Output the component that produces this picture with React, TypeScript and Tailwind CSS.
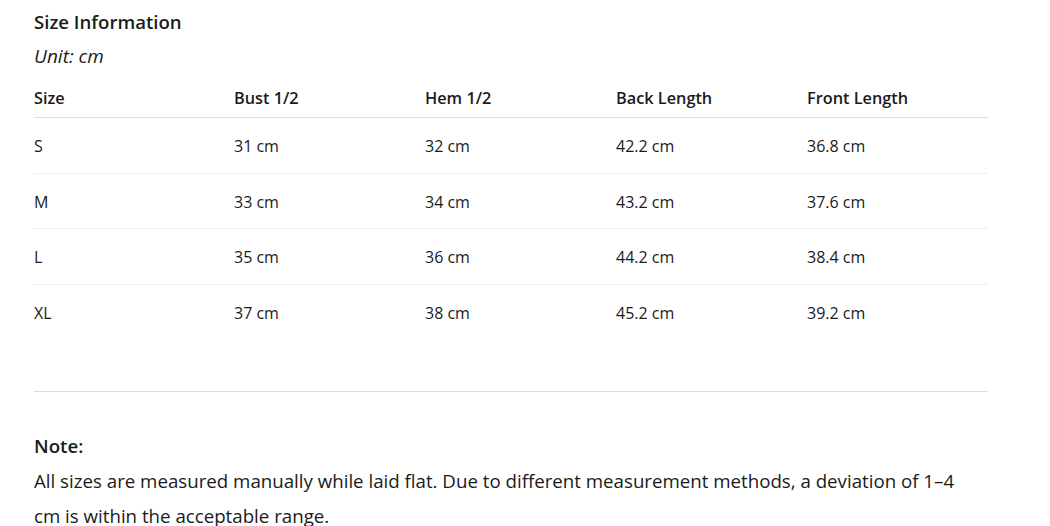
const rows = [
  { size: "S", bust: "31 cm", hem: "32 cm", back: "42.2 cm", front: "36.8 cm" },
  { size: "M", bust: "33 cm", hem: "34 cm", back: "43.2 cm", front: "37.6 cm" },
  { size: "L", bust: "35 cm", hem: "36 cm", back: "44.2 cm", front: "38.4 cm" },
  { size: "XL", bust: "37 cm", hem: "38 cm", back: "45.2 cm", front: "39.2 cm" },
];

const cols = "grid grid-cols-[200px_191px_191px_191px_1fr]";

export default function App() {
  return (
    <div className="bg-white w-[1050px] h-[526px] overflow-hidden px-[34px] text-[#1b1b1b] font-['Open_Sans',sans-serif]">
      <div className="w-[954px]">
        <h2 className="pt-[9px] text-[18.6px] leading-[26px] font-semibold">Size Information</h2>
        <p className="mt-[8px] text-[19px] leading-[26px] italic">Unit: cm</p>

        <div className="mt-[11px]">
          <div className={`${cols} h-[38px] items-center border-b border-[#dcdcdc] text-[16.3px] font-semibold`}>
            <div>Size</div>
            <div>Bust 1/2</div>
            <div>Hem 1/2</div>
            <div>Back Length</div>
            <div>Front Length</div>
          </div>
          {rows.map((r, i) => (
            <div
              key={r.size}
              className={`${cols} h-[55.5px] pt-[2px] items-center text-[16px] ${i < rows.length - 1 ? "border-b border-[#efefef]" : ""}`}
            >
              <div>{r.size}</div>
              <div>{r.bust}</div>
              <div>{r.hem}</div>
              <div>{r.back}</div>
              <div>{r.front}</div>
            </div>
          ))}
        </div>

        <hr className="mt-[51px] border-0 border-t border-[#dcdcdc]" />

        <div className="mt-[40px]">
          <p className="text-[18.7px] leading-[28px] font-semibold">Note:</p>
          <p className="mt-[3px] text-[18.7px] leading-[35px] pr-[10px]">
            All sizes are measured manually while laid flat. Due to different measurement methods, a deviation of 1–4 cm is within the acceptable range.
          </p>
        </div>
      </div>
    </div>
  );
}
